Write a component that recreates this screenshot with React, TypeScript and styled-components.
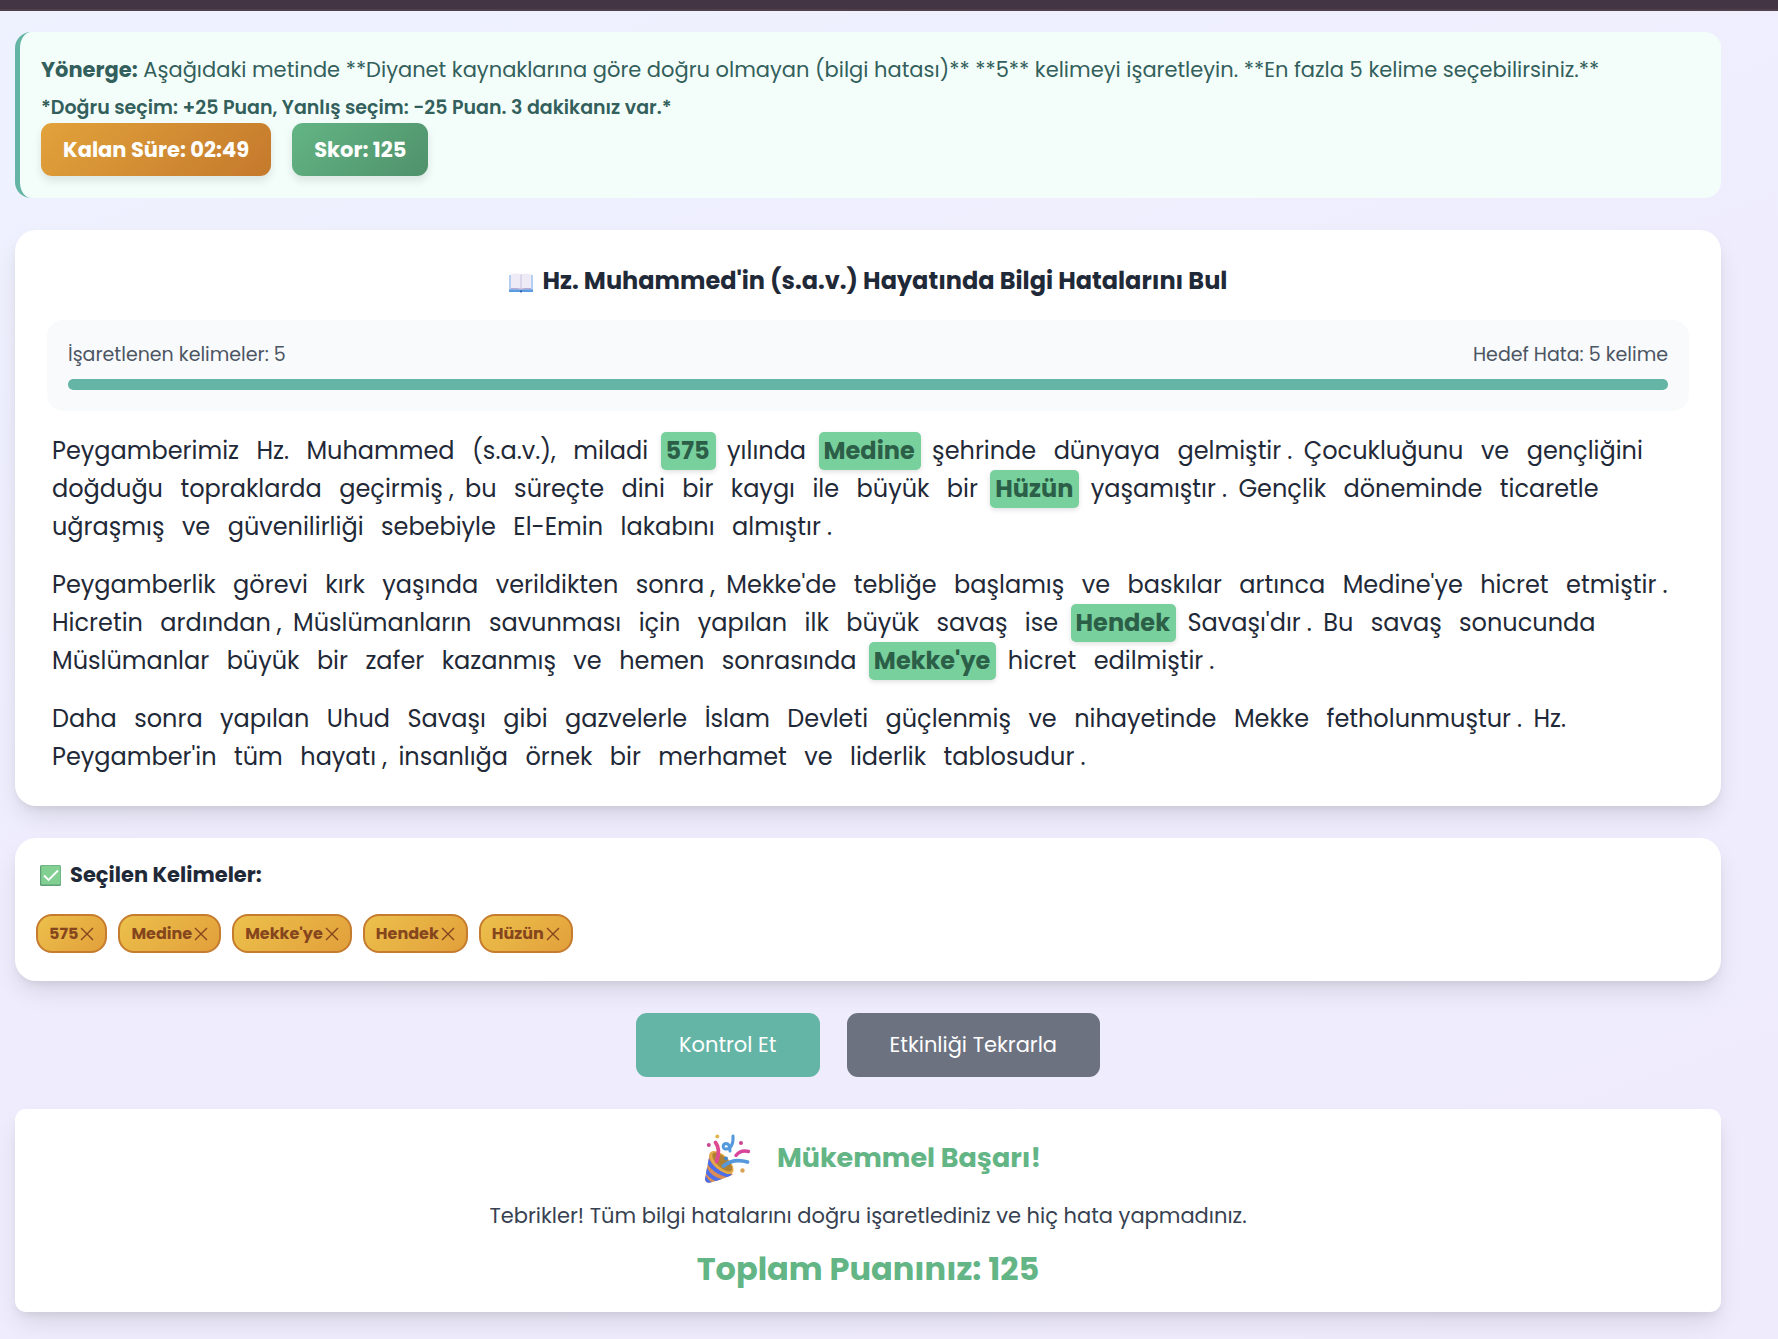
import React, { useState } from "react";
import styled, { createGlobalStyle } from "styled-components";

const GlobalStyle = createGlobalStyle`
  *, *::before, *::after { box-sizing: border-box; }
  body {
    margin: 0;
    min-height: 100vh;
    background: linear-gradient(160deg, #eef2ff 0%, #efedfd 45%, #efebfd 100%);
    font-family: Poppins, Inter, "Open Sans", sans-serif;
    color: #1f2937;
  }
  button { font-family: inherit; cursor: pointer; }
  h2, h3, p { margin: 0; }
`;

const TopBar = styled.header`
  height: 11px;
  background: #443544;
  border-bottom: 2px solid #4f4049;
`;

const Page = styled.main`
  display: flex;
  flex-direction: column;
  gap: 32px;
  padding: 21px 57px 27px 15px;
`;

const Instructions = styled.section`
  padding: 22px 21px;
  border-left: 5px solid #64b5a5;
  border-radius: 16px;
  background: #f3fefa;
  color: #335f5c;
  font-size: 21px;
  line-height: 32px;
`;

const Scoring = styled.p`
  margin-top: 7px;
  font-size: 19px;
  font-weight: 600;
  line-height: 30px;
`;

const Badges = styled.div`
  display: flex;
  flex-wrap: wrap;
  gap: 21px;
`;

const Badge = styled.span<{ $from: string; $to: string }>`
  padding: 0 22px;
  border-radius: 11px;
  background: linear-gradient(135deg, ${(p) => p.$from}, ${(p) => p.$to});
  box-shadow: 0 5px 8px rgba(0, 0, 0, 0.1);
  color: #fff;
  font-size: 21px;
  font-weight: 700;
  line-height: 53px;
`;

const Card = styled.section<{ $pad: string; $radius?: number }>`
  padding: ${(p) => p.$pad};
  border-radius: ${(p) => p.$radius ?? 21}px;
  background: #fff;
  box-shadow: 0 13px 26px -4px rgba(0, 0, 0, 0.11), 0 5px 8px -3px rgba(0, 0, 0, 0.08);
`;

const Title = styled.h2`
  display: flex;
  align-items: center;
  justify-content: center;
  gap: 10px;
  margin-bottom: 21px;
  font-size: 24px;
  font-weight: 700;
  line-height: 37px;
`;

const ProgressBox = styled.div`
  margin-bottom: 21px;
  padding: 21px;
  border-radius: 16px;
  background: #f9fafc;
`;

const ProgressLabels = styled.div`
  display: flex;
  justify-content: space-between;
  margin-bottom: 11px;
  color: #4b5563;
  font-size: 19px;
  line-height: 27px;
`;

const Track = styled.div`
  height: 11px;
  overflow: hidden;
  border-radius: 5px;
  background: #e5e7eb;
`;

const Fill = styled.div`
  height: 100%;
  border-radius: 5px;
  background: #64b5a5;
`;

const Passage = styled.div`
  display: flex;
  flex-direction: column;
  gap: 20px;
  font-size: 24px;
  line-height: 38px;
`;

const Word = styled.button<{ $marked: boolean }>`
  padding: 0 6px 0 5px;
  border: 0;
  border-radius: 5px;
  background: ${(p) => (p.$marked ? "#78d09d" : "transparent")};
  box-shadow: ${(p) => (p.$marked ? "0 2px 5px rgba(0, 0, 0, 0.12)" : "none")};
  color: ${(p) => (p.$marked ? "#2c5f48" : "inherit")};
  font-size: 24px;
  font-weight: ${(p) => (p.$marked ? 700 : 400)};
  line-height: 38px;
`;

const ListTitle = styled.h3`
  display: flex;
  align-items: center;
  gap: 9px;
  margin-bottom: 23px;
  padding-left: 4px;
  font-size: 21px;
  font-weight: 700;
  line-height: 32px;
`;

const Chips = styled.div`
  display: flex;
  flex-wrap: wrap;
  gap: 11px;
`;

const Chip = styled.button`
  display: flex;
  align-items: center;
  gap: 2px;
  height: 39px;
  padding: 0 11px;
  border: 2px solid #c67c2e;
  border-radius: 16px;
  background: linear-gradient(135deg, #ecc04b, #e2a03b);
  color: #85461d;
  font-size: 16px;
  font-weight: 700;
`;

const Actions = styled.div`
  display: flex;
  flex-wrap: wrap;
  justify-content: center;
  gap: 27px;
`;

const Action = styled.button<{ $tone: string }>`
  padding: 0 43px;
  border: 0;
  border-radius: 11px;
  background: ${(p) => p.$tone};
  color: #fff;
  font-size: 21px;
  line-height: 64px;
`;

const Result = styled(Card)`
  display: flex;
  flex-direction: column;
  align-items: center;
  text-align: center;
`;

const ResultTitle = styled.h2`
  display: flex;
  align-items: center;
  gap: 27px;
  height: 56px;
  padding-left: 10px;
  color: #63b585;
  font-size: 27px;
  font-weight: 700;
`;

const ResultText = styled.p`
  margin: 14px 0 13px;
  color: #374151;
  font-size: 21px;
  line-height: 32px;
`;

const Total = styled.p`
  color: #63b585;
  font-size: 32px;
  font-weight: 700;
  line-height: 48px;
`;

const BookIcon = () => (
  <svg width="24" height="24" viewBox="0 0 24 24" aria-hidden="true">
    <path d="M0 6h24v17H0z" fill="#5b9be0" />
    <path d="M0 6h24v14.500H0z" fill="#b4cff2" />
    <path d="M2 5Q7 3.800 12 5.200 17 3.800 22 5V19.500Q17 19 12 20.200 7 19 2 19.500z" fill="#eeebf7" />
    <path d="M12 5.200V20" stroke="#cfc9e2" strokeWidth="1.200" />
    <path d="M2 19.500Q7 19 12 20.200 17 19 22 19.500" fill="none" stroke="#b9a8ce" strokeWidth="1" />
    <path d="M11 21.500h2V23l-1 .8-1-.8z" fill="#2f62b5" />
  </svg>
);

const CheckIcon = () => (
  <svg width="21" height="21" viewBox="0 0 21 21" aria-hidden="true">
    <rect width="21" height="21" rx="1.500" fill="#5f9f78" />
    <rect x="1.200" y=".5" width="19.300" height="19" rx="1" fill="#82cf92" />
    <path d="M4 10.500l4.600 4.500L18 5.500" fill="none" stroke="#fff" strokeWidth="1.900" />
  </svg>
);

const CloseIcon = () => (
  <svg width="14" height="14" viewBox="0 0 14 14" aria-hidden="true">
    <path d="M1 1l12 12M13 1L1 13" fill="none" stroke="#85461d" strokeWidth="1.400" />
  </svg>
);

const PartyIcon = () => (
  <svg width="45" height="49" viewBox="0 0 45 49" fill="none" aria-hidden="true">
    <defs>
      <clipPath id="cone">
        <path d="M5 18.500C3 29 1 38 0 45.500q.5 3.500 4 3.200C12 47 21 44 28 40.500z" />
      </clipPath>
    </defs>
    <g clipPath="url(#cone)">
      <path d="M0 14h32v35H0z" fill="#d98c55" />
      <path d="M2 25c4 9 12 15 24 17" stroke="#4d6eea" strokeWidth="4" />
      <path d="M0 34c3 7 8 11 19 14" stroke="#4d6eea" strokeWidth="4" />
      <path d="M-1 42c2 4 4 6 8 8" stroke="#4d6eea" strokeWidth="3" />
    </g>
    <ellipse cx="16.500" cy="28.500" rx="15" ry="7.300" transform="rotate(43 16.500 28.500)" fill="#e5aa48" />
    <ellipse cx="17.200" cy="28" rx="12.600" ry="5.300" transform="rotate(43 17.200 28)" fill="#ae8135" />
    <path d="M10.500 8.500c4 5 3.500 12 1 19" stroke="#df4b91" strokeWidth="3.800" strokeLinecap="round" />
    <path d="M18.500 32c6-5 14-7 24-4" stroke="#5598dc" strokeWidth="3.800" strokeLinecap="round" />
    <path d="M28 2c.5 8-2 13-7 13-4 0-3.500-5 0-5.500 3.500 0 4 4 4 7.500" stroke="#5499dc" strokeWidth="3" strokeLinecap="round" />
    <path d="M31 21.500c3-4 8-5 12.500-4" stroke="#d9459b" strokeWidth="3.400" strokeLinecap="round" />
    <circle cx="3.800" cy="11" r="2" fill="#c9448f" />
    <circle cx="12.300" cy="2.500" r="2" fill="#e0b552" />
    <circle cx="36" cy="9" r="2" fill="#c9448f" />
    <circle cx="37.500" cy="36.500" r="2.200" fill="#dca254" />
    <circle cx="21" cy="24.500" r="2" fill="#4388c8" />
  </svg>
);

/* A lone full stop or comma is plain text; every other token can be marked. */
const paragraphs = [
  "Peygamberimiz Hz. Muhammed (s.a.v.), miladi 575 yılında Medine şehrinde dünyaya gelmiştir . Çocukluğunu ve gençliğini doğduğu topraklarda geçirmiş , bu süreçte dini bir kaygı ile büyük bir Hüzün yaşamıştır . Gençlik döneminde ticaretle uğraşmış ve güvenilirliği sebebiyle El-Emin lakabını almıştır .",
  "Peygamberlik görevi kırk yaşında verildikten sonra , Mekke'de tebliğe başlamış ve baskılar artınca Medine'ye hicret etmiştir . Hicretin ardından , Müslümanların savunması için yapılan ilk büyük savaş ise Hendek Savaşı'dır . Bu savaş sonucunda Müslümanlar büyük bir zafer kazanmış ve hemen sonrasında Mekke'ye hicret edilmiştir .",
  "Daha sonra yapılan Uhud Savaşı gibi gazvelerle İslam Devleti güçlenmiş ve nihayetinde Mekke fetholunmuştur . Hz. Peygamber'in tüm hayatı , insanlığa örnek bir merhamet ve liderlik tablosudur .",
];

const TARGET = 5;

export default function App() {
  const [selected, setSelected] = useState(["575", "Medine", "Mekke'ye", "Hendek", "Hüzün"]);

  const toggle = (word: string) =>
    setSelected((list) => {
      if (list.includes(word)) return list.filter((w) => w !== word);
      return list.length < TARGET ? [...list, word] : list;
    });

  const renderTokens = (text: string) => {
    const tokens = text.split(" ");
    return tokens.map((token, i) => {
      if (token === "." || token === ",") return <React.Fragment key={i}>{token} </React.Fragment>;
      const next = tokens[i + 1];
      const joined = next === "." || next === ",";
      return (
        <React.Fragment key={i}>
          <Word
            type="button"
            $marked={selected.includes(token)}
            aria-pressed={selected.includes(token)}
            onClick={() => toggle(token)}
          >
            {token}
          </Word>
          {joined ? "" : " "}
        </React.Fragment>
      );
    });
  };

  return (
    <>
      <GlobalStyle />
      <TopBar />
      <Page>
        <Instructions>
          <p>
            <strong>Yönerge:</strong> Aşağıdaki metinde **Diyanet kaynaklarına göre doğru olmayan (bilgi hatası)** **5**
            kelimeyi işaretleyin. **En fazla 5 kelime seçebilirsiniz.**
          </p>
          <Scoring>*Doğru seçim: +25 Puan, Yanlış seçim: -25 Puan. 3 dakikanız var.*</Scoring>
          <Badges>
            <Badge $from="#e2a23b" $to="#c4792c">Kalan Süre: 02:49</Badge>
            <Badge $from="#63b585" $to="#4f916b">Skor: 125</Badge>
          </Badges>
        </Instructions>

        <Card $pad="32px 32px 30px">
          <Title>
            <BookIcon />
            Hz. Muhammed'in (s.a.v.) Hayatında Bilgi Hatalarını Bul
          </Title>
          <ProgressBox>
            <ProgressLabels>
              <span>İşaretlenen kelimeler: {selected.length}</span>
              <span>Hedef Hata: {TARGET} kelime</span>
            </ProgressLabels>
            <Track
              role="progressbar"
              aria-label="İşaretlenen kelimeler"
              aria-valuemin={0}
              aria-valuemax={TARGET}
              aria-valuenow={selected.length}
            >
              <Fill style={{ width: `${(selected.length / TARGET) * 100}%` }} />
            </Track>
          </ProgressBox>
          <Passage>
            {paragraphs.map((text, i) => (
              <p key={i}>{renderTokens(text)}</p>
            ))}
          </Passage>
        </Card>

        <Card $pad="21px 21px 28px">
          <ListTitle>
            <CheckIcon />
            Seçilen Kelimeler:
          </ListTitle>
          <Chips>
            {selected.map((word) => (
              <Chip key={word} type="button" onClick={() => toggle(word)}>
                {word}
                <CloseIcon />
              </Chip>
            ))}
          </Chips>
        </Card>

        <Actions>
          <Action type="button" $tone="#64b5a5">Kontrol Et</Action>
          <Action type="button" $tone="#6c727f">Etkinliği Tekrarla</Action>
        </Actions>

        <Result $pad="21px 21px 19px" $radius={11}>
          <ResultTitle>
            <PartyIcon />
            Mükemmel Başarı!
          </ResultTitle>
          <ResultText>Tebrikler! Tüm bilgi hatalarını doğru işaretlediniz ve hiç hata yapmadınız.</ResultText>
          <Total>Toplam Puanınız: 125</Total>
        </Result>
      </Page>
    </>
  );
}
